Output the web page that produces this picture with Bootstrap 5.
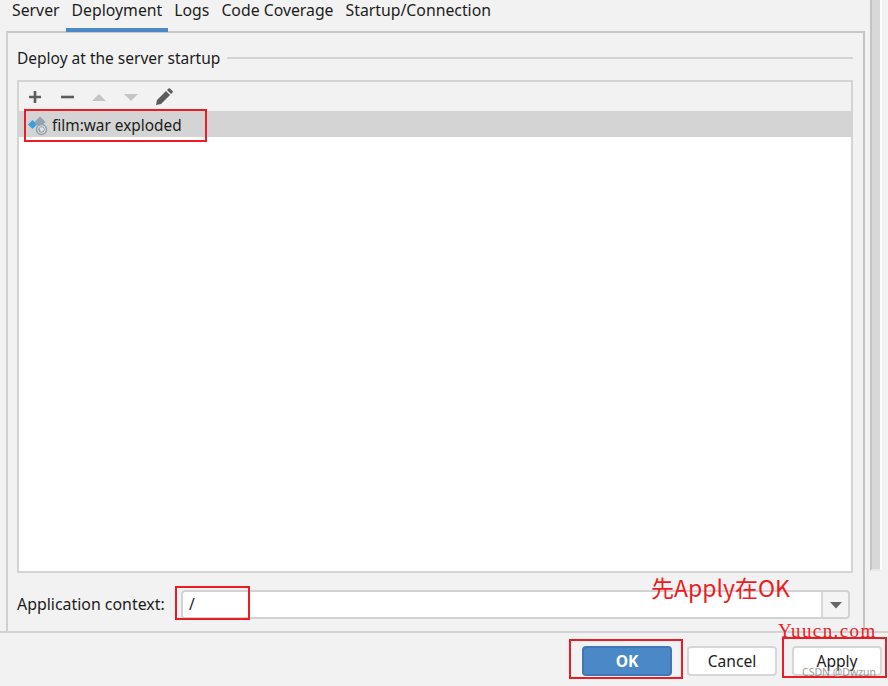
<!DOCTYPE html>
<html lang="en"><head><meta charset="utf-8"><title>Deployment</title>
<link href="https://cdn.jsdelivr.net/npm/bootstrap@5.3.0/dist/css/bootstrap.min.css" rel="stylesheet">
<style>
html,body{margin:0;height:686px;overflow:hidden;background:#f2f2f2;}
body{font-family:"Noto Sans","Noto Sans CJK SC",sans-serif;font-size:15.600px;color:#1c1c1c;position:relative;}
.dlg-main{height:633px;border-bottom:2px solid #d2d2d2;}
.dlg-left{width:865px;padding-left:6px;}
.tab-row{height:31px;position:relative;z-index:1;font-size:15.800px;}
.tab-item{padding:0 6px;height:32px;line-height:21px;}
.tab-item.on{border-bottom:4px solid #4a88c7;}
.tab-pane-box{height:600px;border-top:2px solid #c8c8c8;border-left:2px solid #d0d0d0;border-right:2px solid #c4c4c4;padding:0 10px 0 9px;}
.legend-row{height:47px;padding-top:15px;line-height:21px;font-size:15.500px;}
.legend-line{height:2px;background:#d4d4d4;margin-left:7px;margin-top:9px;}
.list-frame{height:493px;border:2px solid #d4d4d4;background:#fff;}
.tool-row{height:29px;background:#f2f2f2;padding-left:8px;}
.tool-btn{width:32px;height:29px;}
.sel-row{height:26px;background:#d4d4d4;padding-left:9px;font-size:15.400px;}
.sel-icon{margin-top:5px;}
.sel-text{line-height:26px;padding-top:2px;}
.ctx-row{height:58px;padding-top:17px;}
.ctx-label{line-height:29px;width:149px;font-size:15.900px;white-space:nowrap;}
.ctx-input{width:669px;height:29px;border:2px solid #d2d2d2;border-radius:4px;background:#fff;margin-left:15px;padding-left:6px;line-height:25px;}
.ctx-arrow{width:27px;border-left:2px solid #d8d8d8;background:#f4f4f4;border-radius:0 3px 3px 0;}
.scroll-track{width:12px;margin-left:5px;border-left:2px solid #c4c4c4;border-right:2px solid #fff;border-bottom:2px solid #e8e8e8;height:571px;background:#d8d8d8;}
.dlg-foot{height:53px;padding:13px 6px 0 0;gap:15px;}
.act-btn{width:90px;height:30px;border:2px solid #d6d6d6;border-radius:4px;background:#fff;color:#1c1c1c;font-size:15.600px;padding:0;line-height:26px;}
.act-btn.prim{background:#4a88c7;border-color:#3f78b2;color:#fff;font-weight:700;}
.red-box{position:absolute;border:2px solid #ed1c24;pointer-events:none;}
.rb-film{left:24px;top:109px;width:183px;height:33px;}
.rb-ctx{left:175px;top:586px;width:75px;height:34px;}
.rb-ok{left:569px;top:639px;width:114px;height:40px;}
.rb-apply{left:782px;top:637px;width:105px;height:41px;}
.note-cn{position:absolute;left:651px;top:569px;font-size:23px;line-height:36px;color:#ed1c24;font-family:"Noto Sans CJK SC","Noto Sans",sans-serif;white-space:nowrap;}
.note-site{position:absolute;left:778px;top:620px;font-size:19px;line-height:22px;color:#ed1c24;font-family:"Liberation Serif",serif;letter-spacing:1.400px;white-space:nowrap;}
.note-mark{position:absolute;left:802px;top:665px;font-size:10.500px;line-height:15px;color:#8a8a8a;opacity:.85;white-space:nowrap;}
</style></head><body>
<div class="dlg-main d-flex">
 <div class="dlg-left">
  <div class="tab-row d-flex">
   <div class="tab-item">Server</div><div class="tab-item on">Deployment</div><div class="tab-item">Logs</div><div class="tab-item">Code Coverage</div><div class="tab-item">Startup/Connection</div>
  </div>
  <div class="tab-pane-box">
   <div class="legend-row d-flex align-items-start"><span>Deploy at the server startup</span><div class="legend-line flex-grow-1"></div></div>
   <div class="list-frame">
    <div class="tool-row d-flex align-items-center">
     <div class="tool-btn d-flex align-items-center"><svg width="16" height="16" viewBox="0 0 16 16"><path d="M8 2v12M2 8h12" stroke="#5c5c5c" stroke-width="2.600" fill="none"/></svg></div>
     <div class="tool-btn d-flex align-items-center"><svg width="16" height="16" viewBox="0 0 16 16"><path d="M2 8h13" stroke="#5c5c5c" stroke-width="2.600" fill="none"/></svg></div>
     <div class="tool-btn d-flex align-items-center"><svg width="16" height="16" viewBox="0 0 16 16"><path d="M1 12L8 5l7 7z" fill="#c4c4c4"/></svg></div>
     <div class="tool-btn d-flex align-items-center"><svg width="16" height="16" viewBox="0 0 16 16"><path d="M1 5h14L8 12z" fill="#c4c4c4"/></svg></div>
     <div class="tool-btn d-flex align-items-center"><svg width="18" height="18" viewBox="0 0 18 18"><path d="M1 17l1-5L11 3l4 4-9 9zM12 2l1.500-1.500a1 1 0 0 1 1.400 0l2.600 2.600a1 1 0 0 1 0 1.400L16 6z" fill="#5c5c5c"/></svg></div>
    </div>
    <div class="sel-row d-flex align-items-start gap-1"><svg class="sel-icon" width="20" height="20" viewBox="0 0 20 20"><path d="M12 0.500l5.500 5.500L12 11.500 6.500 6z" fill="#94a3b1"/><path d="M4.500 4l4.500 4.500L4.500 13 0 8.500z" fill="#3d9fe0"/><circle cx="13.500" cy="13.500" r="5.800" fill="#98a2ab"/><circle cx="13.500" cy="13.500" r="3.800" fill="none" stroke="#e2e6e9" stroke-width="1"/><path d="M11.500 11.500h3.500l1 2.500-3 2z" fill="#e2e6e9"/></svg><span class="sel-text">film:war exploded</span></div>
   </div>
   <div class="ctx-row d-flex align-items-start">
    <span class="ctx-label">Application context:</span>
    <div class="ctx-input d-flex justify-content-between"><span>/</span><div class="ctx-arrow d-flex align-items-center justify-content-center"><svg width="12" height="8" viewBox="0 0 12 8"><path d="M0 1h12L6 7.500z" fill="#666"/></svg></div></div>
   </div>
  </div>
 </div>
 <div class="scroll-track"></div>
</div>
<div class="dlg-foot d-flex justify-content-end">
 <button class="act-btn prim" type="button">OK</button>
 <button class="act-btn" type="button">Cancel</button>
 <button class="act-btn" type="button">Apply</button>
</div>
<div class="red-box rb-film"></div>
<div class="red-box rb-ctx"></div>
<div class="red-box rb-ok"></div>
<div class="red-box rb-apply"></div>
<div class="note-cn">先Apply在OK</div>
<div class="note-site">Yuucn.com</div>
<div class="note-mark">CSDN @Dwzun</div>
</body></html>
